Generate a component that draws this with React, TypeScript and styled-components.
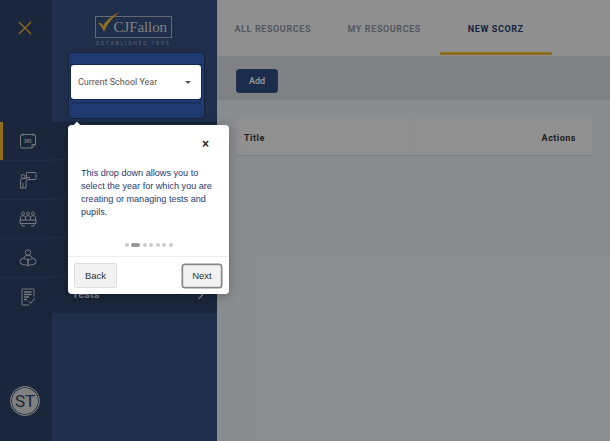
import React from "react";
import styled, {createGlobalStyle} from "styled-components";

const GlobalStyle = createGlobalStyle`
	html, body {
		margin: 0;
		padding: 0;
		background: #8a8e90;
		font-family: "Roboto", "Liberation Sans", sans-serif;
	}
`;

const Page = styled.div`
	position: relative;
	display: flex;
	width: 610px;
	height: 441px;
	overflow: hidden;
	background: #e6ecef;
`;

const Scrim = styled.div`
	position: absolute;
	inset: 0;
	z-index: 1;
	background: rgba(0, 0, 0, 0.4);
`;

const Rail = styled.nav`
	display: flex;
	flex-direction: column;
	width: 52px;
	flex: none;
	background: #2c4063;
`;

const CloseSlot = styled.div`
	display: flex;
	justify-content: center;
	box-sizing: border-box;
	height: 122px;
	padding: 20px 3px 0 0;
	color: #f2b632;
`;

const RailRow = styled.div<{$active?: boolean; $last?: boolean}>`
	display: flex;
	align-items: center;
	justify-content: center;
	height: 38px;
	padding-left: 4px;
	color: #c4c8d0;
	border-bottom: 1px solid ${p => (p.$last ? "transparent" : "#384e72")};
	box-shadow: ${p => (p.$active ? "inset 3px 0 0 #f2b632" : "none")};
`;

const Avatar = styled.div`
	display: flex;
	align-items: center;
	justify-content: center;
	box-sizing: border-box;
	width: 30px;
	height: 30px;
	margin: auto 0 25px 10px;
	border-radius: 50%;
	background: #d6d6d6;
	border: 1px solid #d6d6d6;
	box-shadow: inset 0 0 0 1px #2c4063;
	color: #2c4063;
	font-size: 17px;
`;

const Sidebar = styled.aside`
	display: flex;
	flex-direction: column;
	width: 165px;
	flex: none;
	background: #354d7e;
`;

const Logo = styled.div`
	display: flex;
	flex-direction: column;
	align-items: flex-start;
	height: 52px;
	padding: 16px 0 0 43px;
	box-sizing: border-box;
`;

const LogoBox = styled.div`
	position: relative;
	display: flex;
	align-items: center;
	justify-content: flex-end;
	box-sizing: border-box;
	width: 77px;
	height: 22px;
	padding-right: 4px;
	border: 1.5px solid #a8aeb8;
	color: #d4d7dc;
	font-family: "Liberation Serif", serif;
	font-size: 15px;
	letter-spacing: -0.1px;
`;

const LogoTick = styled.svg`
	position: absolute;
	left: 1px;
	top: -6px;
`;

const LogoSub = styled.div`
	margin: 2px 0 0 1px;
	color: #9aa2ae;
	font-size: 5.5px;
	line-height: 7px;
	letter-spacing: 1.6px;
	white-space: nowrap;
`;

const YearPanel = styled.div`
	position: relative;
	z-index: 2;
	box-sizing: border-box;
	width: 137px;
	height: 67px;
	margin-left: 16px;
	padding: 12px 3px 0 2px;
	border: 1px solid #16233d;
	border-radius: 4px;
	background: #1f3a6e;
`;

const YearSelect = styled.div`
	display: flex;
	align-items: center;
	justify-content: space-between;
	box-sizing: border-box;
	height: 34px;
	padding: 0 10px 0 7px;
	border-radius: 3px;
	background: #fff;
	box-shadow: 0 0 0 1px #14264d;
	color: #555;
	font-size: 9px;
`;

const Caret = styled.span`
	width: 0;
	height: 0;
	border-left: 3.5px solid transparent;
	border-right: 3.5px solid transparent;
	border-top: 3.5px solid #555;
`;

const YearRule = styled.div`
	height: 2px;
	margin-top: 3px;
	background: #17305f;
`;

const NavList = styled.div`
	display: flex;
	flex-direction: column;
	margin-top: 3px;
	height: 191px;
	background: #2c4063;
`;

const NavRow = styled.div<{$last?: boolean}>`
	display: flex;
	align-items: center;
	justify-content: space-between;
	flex: none;
	box-sizing: border-box;
	height: ${p => (p.$last ? "36px" : "39px")};
	padding: 0 13px 0 20px;
	border-bottom: 1px solid ${p => (p.$last ? "transparent" : "#384e72")};
	color: #d0d4da;
	font-size: 11px;
	font-weight: 700;

	&:first-child {
		height: 38px;
	}
`;

const Main = styled.main`
	display: flex;
	flex-direction: column;
	flex: 1;
	min-width: 0;
`;

const Tabs = styled.div`
	display: flex;
	height: 56px;
	padding-bottom: 1px;
	box-sizing: border-box;
	background: #efefef;
`;

const Tab = styled.div<{$active?: boolean}>`
	display: flex;
	align-items: center;
	justify-content: center;
	box-sizing: border-box;
	width: 111.5px;
	padding-top: 5px;
	border-bottom: 3px solid ${p => (p.$active ? "#f2b632" : "transparent")};
	color: ${p => (p.$active ? "#1f3a6e" : "#8c92a0")};
	font-size: 9px;
	font-weight: 700;
	letter-spacing: 0.6px;
	white-space: nowrap;
`;

const ActionBar = styled.div`
	display: flex;
	align-items: flex-start;
	box-sizing: border-box;
	height: 44px;
	padding: 13px 0 0 19px;
	background: #d6d8dd;
`;

const AddButton = styled.button`
	width: 42px;
	height: 24px;
	padding: 0;
	border: 1px solid #3c5482;
	border-radius: 3px;
	background: #2f4a7f;
	color: #fff;
	font-family: inherit;
	font-size: 9px;
	font-weight: 500;
`;

const Content = styled.div`
	flex: 1;
	padding: 19px 18px 0 19px;
`;

const TableHead = styled.div`
	display: grid;
	grid-template-columns: 177px 1fr;
	height: 36px;
	background: #f0f0f0;
	box-shadow: 0 1px 1px rgba(0, 0, 0, 0.08);
	color: #333;
	font-size: 9px;
	font-weight: 700;
	letter-spacing: 0.5px;
`;

const HeadCell = styled.div<{$right?: boolean}>`
	display: flex;
	align-items: center;
	justify-content: ${p => (p.$right ? "flex-end" : "flex-start")};
	padding: ${p => (p.$right ? "1px 16px 0 0" : "1px 0 0 8px")};
	border-left: ${p => (p.$right ? "1px solid #e8e8e8" : "none")};
`;

const Tour = styled.div`
	position: absolute;
	z-index: 3;
	left: 68px;
	top: 125px;
	display: flex;
	flex-direction: column;
	width: 161px;
	height: 169px;
	border-radius: 4px;
	background: #fff;
	box-shadow: 0 2px 12px rgba(0, 0, 0, 0.25);

	&::before {
		content: "";
		position: absolute;
		left: 6px;
		top: -2px;
		width: 6px;
		height: 6px;
		background: #fff;
		transform: rotate(45deg);
	}
`;

const TourClose = styled.div`
	align-self: flex-end;
	margin: 12px 20px 0 0;
	color: #222;
	font-family: "Liberation Sans", sans-serif;
	font-size: 12px;
	font-weight: 700;
	line-height: 14px;
`;

const TourText = styled.p`
	margin: 16px 12px 0 13px;
	color: #1f3a6e;
	font-family: "Liberation Sans", sans-serif;
	font-size: 9.1px;
	line-height: 13px;
`;

const Dots = styled.div`
	display: flex;
	justify-content: center;
	align-items: center;
	gap: 2.5px;
	margin-top: auto;
	margin-bottom: 9px;
`;

const Dot = styled.span<{$on?: boolean}>`
	width: ${p => (p.$on ? "9px" : "4px")};
	height: 4px;
	border-radius: 2px;
	background: ${p => (p.$on ? "#999" : "#ccc")};
`;

const TourFoot = styled.div`
	display: flex;
	align-items: center;
	justify-content: space-between;
	height: 37px;
	padding: 0 8px 0 6px;
	border-top: 1px solid #eee;
`;

const TourButton = styled.button<{$focus?: boolean}>`
	box-sizing: border-box;
	width: ${p => (p.$focus ? "38px" : "43px")};
	height: ${p => (p.$focus ? "22px" : "25px")};
	padding: 0;
	border: 1px solid #ddd;
	border-radius: 2px;
	background: #f2f2f2;
	color: #333;
	font-family: "Liberation Sans", sans-serif;
	font-size: 9.5px;
	box-shadow: ${p => (p.$focus ? "0 0 0 1.5px #888" : "none")};
`;

const Icon = styled.svg`
	display: block;
	fill: none;
	stroke: currentColor;
	stroke-width: 1;
`;

const IconLabel = styled.text`
	fill: currentColor;
	stroke: none;
	font-family: "Liberation Sans", sans-serif;
	font-size: 4.5px;
	font-weight: 700;
`;

const CalendarIcon = () => (
	<Icon width="18" height="16" viewBox="0 0 18 16">
		<path d="M3 1.500h12a1.500 1.500 0 0 1 1.500 1.500v8.500l-3.500 3.500H3A1.500 1.500 0 0 1 1.500 13.500V3A1.500 1.500 0 0 1 3 1.500z" />
		<path d="M4 .5v2.500M14 .5v2.500M13 15v-3.500h3.500" />
		<IconLabel x="5" y="9.500">365</IconLabel>
	</Icon>
);

const TeacherIcon = () => (
	<Icon width="18" height="17" viewBox="0 0 18 17">
		<rect x="7.500" y=".5" width="9.500" height="7" rx="1" />
		<circle cx="4" cy="4.500" r="1.900" />
		<path d="M1.500 16V9c0-1.500 1-2.500 2.500-2.500h2L10 5l1 1.500-4 2.500v7zM4 11v5" />
	</Icon>
);

const PupilsIcon = () => (
	<Icon width="18" height="16" viewBox="0 0 18 16">
		<circle cx="4" cy="2.500" r="1.500" />
		<circle cx="9" cy="2.500" r="1.500" />
		<circle cx="14" cy="2.500" r="1.500" />
		<path d="M1.500 10V6.500c0-1 1-1.800 2.500-1.800s2.500.8 2.500 1.800c0-1 1-1.800 2.500-1.800s2.500.8 2.500 1.800c0-1 1-1.800 2.500-1.800s2.500.8 2.500 1.800V10" />
		<path d="M1 9h16v3.500H1zM3 12.500V15h3M15 12.500V15h-3M6.500 6.500V9M11.500 6.500V9" />
	</Icon>
);

const ReaderIcon = () => (
	<Icon width="18" height="18" viewBox="0 0 18 18">
		<circle cx="9" cy="3.500" r="2.700" />
		<path d="M4.500 9.500a4.700 4.700 0 0 1 9 0" />
		<path d="M9 10.500v6.500c-1.500-1-3-1.500-5-1.500a3 3 0 0 1 0-6c2 0 3.500.5 5 1s3-1 5-1a3 3 0 0 1 0 6c-2 0-3.500.5-5 1.500z" />
	</Icon>
);

const ReportIcon = () => (
	<Icon width="14" height="18" viewBox="0 0 14 18">
		<path d="M13 8.500V1H1v16h7" />
		<path d="M3 4h7.500M3 6.500h7.500M3 9h5M3 11.500h3" strokeWidth="1.300" />
		<path d="M7.500 13l2.200 2.500L14 10" />
	</Icon>
);

const Chevron = () => (
	<Icon width="7" height="10" viewBox="0 0 7 10">
		<path d="M1.500 1l4 4-4 4" strokeWidth="1.400" />
	</Icon>
);

export default function App() {
	return (
		<Page>
			<GlobalStyle />
			<Rail>
				<CloseSlot>
					<Icon width="16" height="16" viewBox="0 0 16 16">
						<path d="M2 2l12 12M14 2L2 14" strokeWidth="1.200" />
					</Icon>
				</CloseSlot>
				<RailRow $active><CalendarIcon /></RailRow>
				<RailRow><TeacherIcon /></RailRow>
				<RailRow><PupilsIcon /></RailRow>
				<RailRow><ReaderIcon /></RailRow>
				<RailRow $last><ReportIcon /></RailRow>
				<Avatar>ST</Avatar>
			</Rail>
			<Sidebar>
				<Logo>
					<LogoBox>
						<LogoTick width="24" height="22" viewBox="0 0 24 22">
							<path d="M1 12c2-.8 3.500.3 5 3C9.500 9 15 4 23 1 16 6 10 13 7 21 5.500 17 3.500 14 1 12z" fill="#f2b632" />
						</LogoTick>
						CJFallon
					</LogoBox>
					<LogoSub>ESTABLISHED 1895</LogoSub>
				</Logo>
				<YearPanel>
					<YearSelect>
						Current School Year
						<Caret />
					</YearSelect>
					<YearRule />
				</YearPanel>
				<NavList>
					<NavRow />
					<NavRow />
					<NavRow />
					<NavRow />
					<NavRow $last>Tests<Chevron /></NavRow>
				</NavList>
			</Sidebar>
			<Main>
				<Tabs>
					<Tab>ALL RESOURCES</Tab>
					<Tab>MY RESOURCES</Tab>
					<Tab $active>NEW SCORZ</Tab>
				</Tabs>
				<ActionBar>
					<AddButton>Add</AddButton>
				</ActionBar>
				<Content>
					<TableHead>
						<HeadCell>Title</HeadCell>
						<HeadCell $right>Actions</HeadCell>
					</TableHead>
				</Content>
			</Main>
			<Scrim />
			<Tour>
				<TourClose>×</TourClose>
				<TourText>This drop down allows you to select the year for which you are creating or managing tests and pupils.</TourText>
				<Dots>
					<Dot /><Dot $on /><Dot /><Dot /><Dot /><Dot /><Dot />
				</Dots>
				<TourFoot>
					<TourButton>Back</TourButton>
					<TourButton $focus>Next</TourButton>
				</TourFoot>
			</Tour>
		</Page>
	);
}
